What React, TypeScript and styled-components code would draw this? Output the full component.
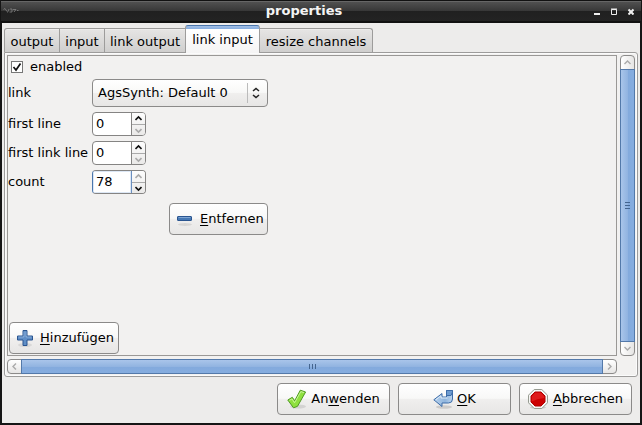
import React from "react";
import styled, { createGlobalStyle, css } from "styled-components";

const GlobalStyle = createGlobalStyle`
  body { margin: 0; overflow: hidden; background: #151515; }
  * { box-sizing: border-box; }
  svg { display: block; flex: none; }
`;

const Window = styled.div`
  width: 642px;
  height: 425px;
  display: flex;
  flex-direction: column;
  padding: 0 2px 2px;
  background: #151515;
  font: 13px/16px "DejaVu Sans", sans-serif;
  color: #000;
  white-space: nowrap;
`;

const TitleBar = styled.header`
  flex: none;
  height: 23px;
  margin: 0 -1px;
  display: grid;
  grid-template-columns: 20px 1fr 54px;
  border-top: 1px solid #111;
  border-bottom: 2px solid #111;
  background: linear-gradient(#666 0 1px, #505050 1px, #373737 10px, #202020 10px, #232323);
`;

const WindowIcon = styled.div`
  padding: 6px 0 0 2px;
`;

const Title = styled.h1`
  margin: 0;
  padding-top: 2px;
  text-align: center;
  font: bold 13px/15px "DejaVu Sans", sans-serif;
  color: #f4f4f4;
`;

const WindowControls = styled.div`
  display: flex;
  justify-content: flex-end;
  gap: 11px;
  padding: 7px 7px 0 0;
`;

const Body = styled.main`
  flex: 1;
  display: flex;
  flex-direction: column;
  padding: 2px 2px 0;
  background: #edeceb;
`;

const TabStrip = styled.nav`
  height: 27px;
  display: flex;
  align-items: flex-end;
`;

const Tab = styled.div<{ $width: number; $active?: boolean; $last?: boolean }>`
  position: relative;
  flex: none;
  width: ${(p) => p.$width}px;
  height: 24px;
  padding-top: 5px;
  margin-right: -1px;
  text-align: center;
  border: 1px solid #9d9c9b;
  border-bottom: 0;
  border-radius: ${(p) => (p.$last ? "0 3px 0 0" : "0")};
  background: linear-gradient(#e6e5e4, #d0cfce);
  box-shadow: inset 0 1px 0 #efeeee;
  &:first-child { border-top-left-radius: 3px; }
  ${(p) =>
    p.$active &&
    css`
      z-index: 1;
      height: 28px;
      padding-top: 6px;
      margin-bottom: -1px;
      border-radius: 3px 3px 0 0;
      border-top-color: #4a76ad;
      background: linear-gradient(#a3c0e6 0, #86ade0 3px, #fff 3px, #f5f4f4);
      box-shadow: none;
    `}
`;

const Notebook = styled.section`
  width: 634px;
  height: 325px;
  display: grid;
  grid-template-columns: 610px 15px;
  grid-template-rows: 301px 15px;
  gap: 3px;
  padding: 2px;
  border: 1px solid #9d9c9b;
  border-radius: 0 3px 3px 3px;
  background: #f2f1f0;
  box-shadow: inset 0 0 0 1px #fbfbfb;
`;

const Viewport = styled.div`
  display: flex;
  flex-direction: column;
  border: 1px solid #9a9896;
  background: #f2f1f0;
`;

const CheckRow = styled.label`
  height: 23px;
  display: flex;
  align-items: center;
  gap: 7px;
  padding: 0 0 1px 3px;
`;

const CheckBox = styled.span`
  width: 12px;
  height: 12px;
  border: 1px solid #777;
  background: #fff;
`;

const Fields = styled.div`
  display: grid;
  grid-template-columns: 81px 176px;
  grid-template-rows: 28px 24px 24px 24px;
  row-gap: 5px;
  column-gap: 3px;
  align-items: center;
`;

const raised = css`
  border: 1px solid #8b8a89;
  border-radius: 4px;
  background: linear-gradient(#fff, #f8f8f7 48%, #f0efee 50%, #e7e6e5);
`;

const Select = styled.div`
  ${raised}
  height: 28px;
  display: flex;
  align-items: center;
  padding: 0 7px 0 5px;
  & > span { flex: 1; }
`;

const SelectArrows = styled.div`
  display: flex;
  align-items: center;
  height: 20px;
  padding-left: 4px;
  border-left: 1px solid #bbb;
`;

const Spin = styled.div<{ $focus?: boolean }>`
  width: 54px;
  height: 24px;
  display: grid;
  grid-template-columns: 39px 1fr;
  overflow: hidden;
  border: 1px solid #858483;
  border-radius: 4px;
  background: #fff;
  ${(p) => p.$focus && css`border-left-color: #4a76ad;`}
`;

const SpinValue = styled.div<{ $focus?: boolean }>`
  padding: 3px 0 0 3px;
  border-right: 1px solid #858483;
  ${(p) => p.$focus && css`
    box-shadow: inset 0 0 0 1px #dce7f5;
    border-right-color: #6b8fbf;
  `}
`;

const SpinButtons = styled.div`
  display: grid;
  grid-template-rows: 11px 11px;
  background: linear-gradient(#fdfdfd, #eae9e8);
  & > div { display: flex; align-items: center; justify-content: center; }
  & > div + div { border-top: 1px solid #aaa; }
`;

const Button = styled.button<{ $width: number; $gap?: number; $center?: boolean }>`
  ${raised}
  width: ${(p) => p.$width}px;
  height: 32px;
  display: flex;
  align-items: center;
  justify-content: ${(p) => (p.$center ? "center" : "flex-start")};
  gap: ${(p) => p.$gap ?? 4}px;
  padding: 0 0 0 ${(p) => (p.$center ? 0 : 5)}px;
  font: inherit;
  color: #000;
  & > span { padding-bottom: 1px; }
  u { text-decoration-thickness: 1px; text-underline-offset: 2px; text-decoration-skip-ink: none; }
`;

const RemoveRow = styled.div`
  padding: 9px 0 0 161px;
`;

const AddRow = styled.div`
  margin-top: auto;
  padding: 0 0 1px 1px;
`;

const ScrollBar = styled.div<{ $vertical?: boolean }>`
  display: flex;
  flex-direction: ${(p) => (p.$vertical ? "column" : "row")};
  border: 1px solid #8c8b8a;
  border-radius: 4px;
  background: linear-gradient(${(p) => (p.$vertical ? "90deg" : "180deg")}, #fff, #e6e5e4);
`;

const ScrollEnd = styled.div`
  flex: 0 0 13px;
  display: flex;
  align-items: center;
  justify-content: center;
`;

const Thumb = styled.div<{ $vertical?: boolean }>`
  flex: 1;
  display: flex;
  flex-direction: ${(p) => (p.$vertical ? "column" : "row")};
  align-items: center;
  justify-content: center;
  gap: 2px;
  margin: ${(p) => (p.$vertical ? "0 -1px" : "-1px 0")};
  border: 1px solid #5379aa;
  background: linear-gradient(${(p) => (p.$vertical ? "90deg" : "180deg")}, #a9c5ea, #92b4e1 50%, #83aadd 52%, #86addf);
  & > i {
    width: ${(p) => (p.$vertical ? 5 : 1)}px;
    height: ${(p) => (p.$vertical ? 1 : 5)}px;
    background: #44658f;
  }
`;

const Actions = styled.footer`
  display: flex;
  justify-content: flex-end;
  gap: 8px;
  padding: 6px 6px 0 0;
`;

const turns = { up: 0, right: 90, down: 180, left: 270 };

function Chevron({ dir, size = 7, color = "#222", weight = 1.6 }: { dir: keyof typeof turns; size?: number; color?: string; weight?: number }) {
  return (
    <svg width={size} height={size} viewBox="0 0 7 7" fill="none" stroke={color} strokeWidth={weight}>
      <path d="M.5 5 3.5 2l3 3" transform={`rotate(${turns[dir]} 3.5 3.5)`} />
    </svg>
  );
}

function NumberField({ value, focus, upOff }: { value: number; focus?: boolean; upOff?: boolean }) {
  return (
    <Spin $focus={focus}>
      <SpinValue $focus={focus}>{value}</SpinValue>
      <SpinButtons>
        <div><Chevron dir="up" color={upOff ? "#aaa" : "#111"} /></div>
        <div><Chevron dir="down" color={upOff ? "#111" : "#aaa"} /></div>
      </SpinButtons>
    </Spin>
  );
}

function Scroller({ vertical }: { vertical?: boolean }) {
  return (
    <ScrollBar $vertical={vertical}>
      <ScrollEnd><Chevron dir={vertical ? "up" : "left"} color="#aaa" weight={1.4} /></ScrollEnd>
      <Thumb $vertical={vertical}><i /><i /><i /></Thumb>
      <ScrollEnd><Chevron dir={vertical ? "down" : "right"} color="#aaa" weight={1.4} /></ScrollEnd>
    </ScrollBar>
  );
}

const Plus = () => (
  <svg width="20" height="20" viewBox="0 0 20 20">
    <ellipse cx="10" cy="17" rx="7" ry="2" fill="#000" opacity=".08" />
    <path d="M8 2.500h4V8h5.500v4H12v5.500H8V12H2.500V8H8z" fill="#5f8ec6" stroke="#2a5590" strokeLinejoin="round" />
    <path d="M9 3.500v5.500H3.500M11 3.500v5.500h5.500" fill="none" stroke="#a4c2e4" opacity=".6" />
  </svg>
);

const Minus = () => (
  <svg width="20" height="20" viewBox="0 0 20 20">
    <ellipse cx="10" cy="15.500" rx="7" ry="1.500" fill="#000" opacity=".09" />
    <rect x="2.500" y="7.500" width="14" height="4" rx=".5" fill="#4678b4" stroke="#2a5590" />
    <path d="M3.500 8.500h12" stroke="#7fa5d3" />
  </svg>
);

const Check = () => (
  <svg width="20" height="20" viewBox="0 0 20 20">
    <ellipse cx="11" cy="17.500" rx="8" ry="2" fill="#000" opacity=".1" />
    <path d="M.8 11 5.300 8.300 7.700 11.800 13.300 1.200 18.600 3 10.500 17.300 6.500 18.800z" fill="#8fe03f" stroke="#4f9a22" strokeLinejoin="round" />
    <path d="M2.500 11.400 5 9.900l2.500 3.900L13.900 2.600l3 1" fill="none" stroke="#c9f59a" />
  </svg>
);

const Return = () => (
  <svg width="20" height="20" viewBox="0 0 20 20">
    <defs>
      <linearGradient id="arrow-fill" x1="0" x2="1">
        <stop offset="0" stopColor="#b9d3ee" />
        <stop offset=".6" stopColor="#8fb4dc" />
        <stop offset="1" stopColor="#bcd5ef" />
      </linearGradient>
    </defs>
    <ellipse cx="11" cy="18" rx="8" ry="1.700" fill="#000" opacity=".13" />
    <path d="M13.500 1.500h6V10q0 4-4 4H9v3.500L.8 10.800 9 4.500V8h4.500z" fill="url(#arrow-fill)" stroke="#3d6ca8" strokeLinejoin="round" />
    <path d="M13.500 1.500h6v1.500l-1.500 3.500h-4.500z" fill="#6d9bd0" stroke="#3d6ca8" strokeLinejoin="round" />
    <path d="M2.800 10.700 8 6.800V9h6.500" fill="none" stroke="#e1edf9" />
  </svg>
);

const Stop = () => (
  <svg width="20" height="20" viewBox="0 0 20 20">
    <ellipse cx="10" cy="18.500" rx="8" ry="1.500" fill="#000" opacity=".13" />
    <path d="M6.200.5h7.600l5.700 5.700v7.600l-5.700 5.700H6.200L.5 13.800V6.200z" fill="#f5f5f3" stroke="#969b91" />
    <path d="M7 3h6l4 4v6l-4 4H7l-4-4V7z" fill="#cc0000" stroke="#b00000" />
    <path d="M7.200 3.800h5.600L16.200 7.200V9Q9 9.500 3.800 12.500V7.200z" fill="#df1a1a" />
  </svg>
);

export default function App() {
  return (
    <>
      <GlobalStyle />
      <Window>
        <TitleBar>
          <WindowIcon>
            <svg width="16" height="8" viewBox="0 0 16 8" fill="none" stroke="#858585" strokeWidth=".8">
              <path d="M.5 2.500 2 1.500l2 3M6 2 4.500 5.500M7 2h2v3H6.500M10 2.500h3L11 5M14 3.500h1.500" />
            </svg>
          </WindowIcon>
          <Title>properties</Title>
          <WindowControls>
            <svg width="6" height="7"><path d="M0 5h6v2H0z" fill="#eee" /></svg>
            <svg width="6" height="7"><path d="M.5 1.500h5v5h-5z M0 1h6" fill="none" stroke="#eee" /></svg>
            <svg width="6" height="7"><path d="M.5 1.500l5 5M5.500 1.500l-5 5" stroke="#eee" strokeWidth="2" /></svg>
          </WindowControls>
        </TitleBar>
        <Body>
          <TabStrip>
            <Tab $width={56}>output</Tab>
            <Tab $width={46}>input</Tab>
            <Tab $width={82}>link output</Tab>
            <Tab $width={75} $active>link input</Tab>
            <Tab $width={114} $last>resize channels</Tab>
          </TabStrip>
          <Notebook>
            <Viewport>
              <CheckRow>
                <CheckBox>
                  <svg width="10" height="10" viewBox="0 0 10 10"><path d="M1.500 5 4 8 8.500 1.500" fill="none" stroke="#111" strokeWidth="1.700" /></svg>
                </CheckBox>
                enabled
              </CheckRow>
              <Fields>
                <span>link</span>
                <Select>
                  <span>AgsSynth: Default 0</span>
                  <SelectArrows>
                    <svg width="8" height="12" viewBox="0 0 8 12" fill="none" stroke="#222" strokeWidth="1.500">
                      <path d="M1 4l3-2.500L7 4M1 8l3 2.500L7 8" />
                    </svg>
                  </SelectArrows>
                </Select>
                <span>first line</span>
                <NumberField value={0} />
                <span>first link line</span>
                <NumberField value={0} />
                <span>count</span>
                <NumberField value={78} focus upOff />
              </Fields>
              <RemoveRow>
                <Button $width={99} $gap={5}><Minus /><span><u>E</u>ntfernen</span></Button>
              </RemoveRow>
              <AddRow>
                <Button $width={110} $gap={5}><Plus /><span><u>H</u>inzufügen</span></Button>
              </AddRow>
            </Viewport>
            <Scroller vertical />
            <Scroller />
          </Notebook>
          <Actions>
            <Button $width={113} $center><Check /><span>An<u>w</u>enden</span></Button>
            <Button $width={113} $center><Return /><span><u>O</u>K</span></Button>
            <Button $width={113} $center $gap={5}><Stop /><span><u>A</u>bbrechen</span></Button>
          </Actions>
        </Body>
      </Window>
    </>
  );
}
